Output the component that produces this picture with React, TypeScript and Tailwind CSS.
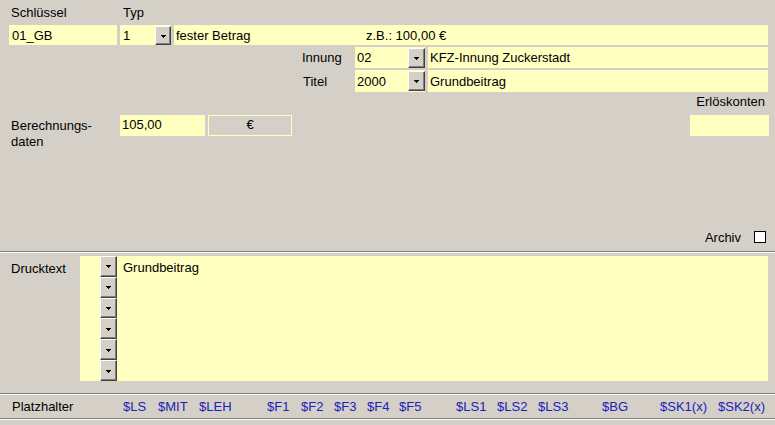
import React from 'react'

// ─── Dropdown button (Win classic) ─────────────────────────────────────────────
function DropBtn({ className }: { className?: string }) {
  return (
    <div
      className={`flex items-center justify-center bg-[#d4d0c8] border border-t-white border-l-white border-r-[#404040] border-b-[#404040] shadow-[inset_-1px_-1px_0_#808080] ${className ?? ''}`}
    >
      <svg width="5" height="3" viewBox="0 0 5 3" shapeRendering="crispEdges" className="mt-[1px]">
        <path d="M0 0h5v1H4v1H3v1H2V2H1V1H0z" fill="#000" />
      </svg>
    </div>
  )
}

function Separator() {
  return <div className="h-[2px] border-t border-t-[#808080] border-b border-b-white" />
}

const placeholders = [
  { t: '$LS', w: 'w-[35px]' },
  { t: '$MIT', w: 'w-[41px]' },
  { t: '$LEH', w: 'w-[68px]' },
  { t: '$F1', w: 'w-[34px]' },
  { t: '$F2', w: 'w-[33px]' },
  { t: '$F3', w: 'w-[33px]' },
  { t: '$F4', w: 'w-[32px]' },
  { t: '$F5', w: 'w-[57px]' },
  { t: '$LS1', w: 'w-[41px]' },
  { t: '$LS2', w: 'w-[41px]' },
  { t: '$LS3', w: 'w-[64px]' },
  { t: '$BG', w: 'w-[58px]' },
  { t: '$SK1(x)', w: 'w-[58px]' },
  { t: '$SK2(x)', w: 'w-[50px]' },
]

export default function App() {
  return (
    <div className="w-[775px] h-[425px] overflow-hidden bg-[#d4d0c8] text-black text-[13px] leading-[15px] font-['Liberation_Sans',Arial,sans-serif]">
      {/* Kopfbereich */}
      <div className="h-[251px] flex flex-col">
        <div className="h-[25px] flex items-start pt-[5px]">
          <span className="w-[123px] pl-[11px]">Schlüssel</span>
          <span>Typ</span>
        </div>

        <div className="h-[20px] flex pl-[9px]">
          <div className="w-[108px] bg-[#ffffc0] flex items-center pl-[3px]">01_GB</div>
          <div className="ml-[3px] w-[51px] flex bg-[#ffffc0]">
            <div className="w-[35px] flex items-center pl-[3px]">1</div>
            <DropBtn className="w-[16px] h-[19px] mt-[1px]" />
          </div>
          <div className="ml-[3px] w-[594px] bg-[#ffffc0] flex items-center pl-[2px]">
            <span className="w-[190px]">fester Betrag</span>
            <span>z.B.: 100,00 €</span>
          </div>
        </div>

        <div className="mt-[2px] h-[21px] flex pl-[302px]">
          <span className="w-[53px] flex items-center">Innung</span>
          <div className="w-[70px] flex bg-[#ffffc0]">
            <div className="w-[53px] flex items-center pl-[2px]">02</div>
            <DropBtn className="w-[17px] h-[20px] mt-[1px]" />
          </div>
          <div className="ml-[3px] w-[340px] bg-[#ffffc0] flex items-center pl-[2px]">KFZ-Innung Zuckerstadt</div>
        </div>

        <div className="mt-[2px] h-[22px] flex pl-[302px]">
          <span className="w-[53px] flex items-center pl-[1px]">Titel</span>
          <div className="w-[70px] flex bg-[#ffffc0]">
            <div className="w-[53px] flex items-center pl-[2px]">2000</div>
            <DropBtn className="w-[17px] h-[20px] mt-[1px]" />
          </div>
          <div className="ml-[3px] w-[340px] bg-[#ffffc0] flex items-center pl-[2px]">Grundbeitrag</div>
        </div>

        <div className="h-[23px] flex justify-end items-start pt-[2px] pr-[10px]">Erlöskonten</div>

        <div className="h-[21px] flex pl-[9px]">
          <div className="w-[111px] pl-[2px] pt-[3px] leading-[16px]">
            Berechnungs-
            <br />
            daten
          </div>
          <div className="w-[85px] bg-[#ffffc0] flex items-center pl-[2px] pb-[2px]">105,00</div>
          <div className="ml-[3px] w-[84px] border border-[#ffffc0] flex items-center justify-center pb-[2px]">€</div>
          <div className="flex-1" />
          <div className="w-[79px] mr-[6px] bg-[#ffffc0]" />
        </div>

        <div className="mt-auto mb-[5px] h-[18px] flex items-center justify-end pr-[9px]">
          <span>Archiv</span>
          <div className="ml-[13px] w-[12px] h-[12px] bg-white border border-black" />
        </div>
      </div>

      <Separator />

      {/* Drucktext */}
      <div className="h-[140px] flex pt-[3px]">
        <div className="w-[80px] pl-[11px] pt-[5px]">Drucktext</div>
        <div className="w-[688px] h-[125px] bg-[#ffffc0] flex pl-[20px]">
          <div className="w-[17px] flex flex-col">
            {[0, 1, 2, 3, 4, 5].map(i => (
              <DropBtn key={i} className="flex-1" />
            ))}
          </div>
          <div className="ml-[3px] flex-1 pl-[3px] pt-[4px]">Grundbeitrag</div>
        </div>
      </div>

      <Separator />

      {/* Platzhalter */}
      <div className="h-[23px] flex items-center">
        <span className="w-[123px] pl-[12px]">Platzhalter</span>
        {placeholders.map(p => (
          <span key={p.t} className={`${p.w} text-[#2020b8]`}>
            {p.t}
          </span>
        ))}
      </div>

      <Separator />
    </div>
  )
}
